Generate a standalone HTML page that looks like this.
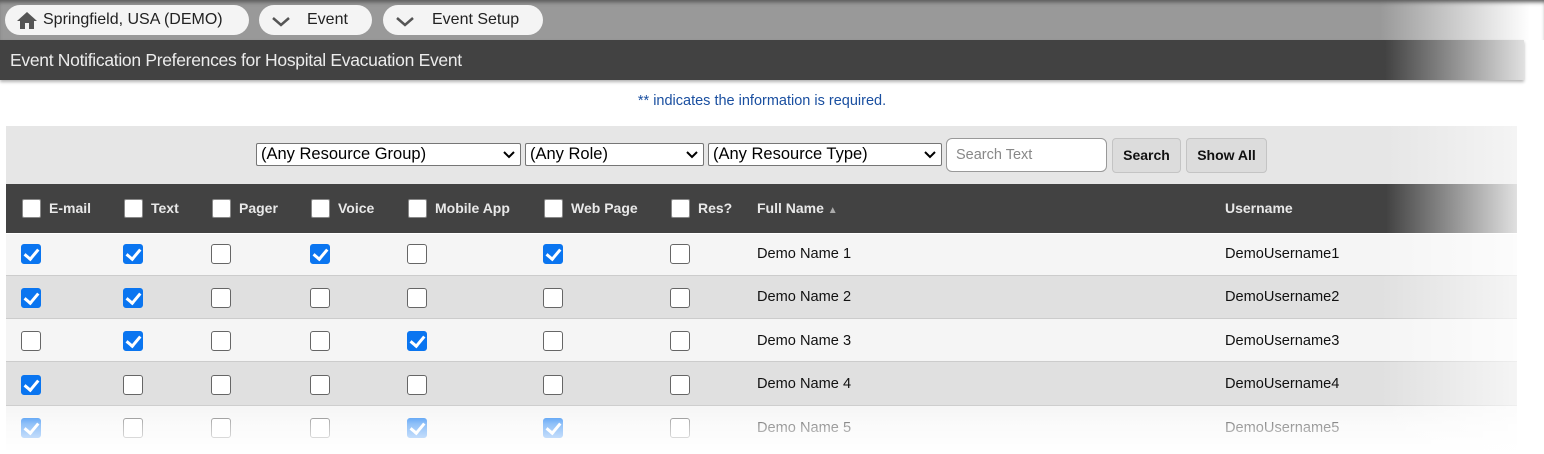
<!DOCTYPE html>
<html><head><style>
*{box-sizing:border-box;margin:0;padding:0}
body{width:1544px;height:454px;overflow:hidden;background:#fff;font-family:"Liberation Sans",Arial,sans-serif;position:relative}
.a{position:absolute}
.pill{position:absolute;top:5px;height:30px;background:#f4f4f4;border-radius:15px;font-size:16px;color:#222;line-height:30px}
.sel{position:absolute;top:143px;height:23px;background:#fff;border:1px solid #767676;border-radius:2px;font-size:16.5px;line-height:21px;padding-left:4px;color:#000}
.sel svg{position:absolute;right:5px;top:7px}
.btn{position:absolute;top:138px;height:35px;background:#dcdcdc;border:1px solid #c4c4c4;border-radius:4px;font-size:14px;font-weight:bold;line-height:33px;text-align:center;color:#111}
.hd{position:absolute;top:184px;left:6px;width:1511px;height:49px;background:#424242}
.hcb{position:absolute;top:199px;width:19px;height:19px;background:#fff;border:1px solid #888;border-radius:2px}
.hl{position:absolute;top:200px;color:#e8e8e8;font-size:14px;font-weight:bold}
.row{position:absolute;left:6px;width:1511px;border-bottom:1px solid #ccc}
.cb{position:absolute;width:20px;height:20px;border:1.5px solid #666;border-radius:3px;background:#fff}
.cb.c{background:#0a75f0;border-color:#0a75f0}
.cb.c::after{content:"";position:absolute;left:5px;top:1px;width:6px;height:11px;border:solid #fff;border-width:0 3px 3px 0;transform:rotate(40deg)}
.t{position:absolute;font-size:14.6px;color:#111}
</style></head><body>
<div class="a" style="left:0;top:0;width:1544px;height:40px;background:linear-gradient(90deg,#999 0,#999 1380px,#fff 1530px);box-shadow:inset 0 4px 4px -2px #555"></div>
<div class="pill" style="left:5px;width:244px;padding-left:38px">Springfield, USA (DEMO)
<svg class="a" style="left:12px;top:7px" width="20" height="17" viewBox="0 0 20 17"><path d="M10 0 L20 9 H17 V17 H12 V11 H8 V17 H3 V9 H0 Z" fill="#555"/></svg></div>
<div class="pill" style="left:259px;width:113px;padding-left:48px">Event
<svg class="a" style="left:12px;top:11px" width="20" height="12"><path d="M2 2 L10 9 L18 2" stroke="#555" stroke-width="2.5" fill="none"/></svg></div>
<div class="pill" style="left:383px;width:160px;padding-left:49px">Event Setup
<svg class="a" style="left:12px;top:11px" width="20" height="12"><path d="M2 2 L10 9 L18 2" stroke="#555" stroke-width="2.5" fill="none"/></svg></div>
<div class="a" style="left:0;top:40px;width:1524px;height:40px;background:linear-gradient(90deg,#424242 0,#424242 1385px,#e0e0e0 1524px);box-shadow:0 2px 3px rgba(0,0,0,.3);color:#ececec;font-size:17.5px;line-height:40px;padding-left:10px;letter-spacing:-0.3px">Event Notification Preferences for Hospital Evacuation Event</div>
<div class="a" style="left:0;top:93px;width:1524px;text-align:center;font-size:14.5px;color:#1a4fa0">** indicates the information is required.</div>
<div class="a" style="left:6px;top:126px;width:1511px;height:58px;background:linear-gradient(90deg,#e6e6e6 0,#e6e6e6 1380px,#f4f4f4 1511px)"></div>
<div class="sel" style="left:256px;width:265px">(Any Resource Group)<svg width="12" height="8"><path d="M1 1 L6 6 L11 1" stroke="#000" stroke-width="2" fill="none"/></svg></div>
<div class="sel" style="left:525px;width:179px">(Any Role)<svg width="12" height="8"><path d="M1 1 L6 6 L11 1" stroke="#000" stroke-width="2" fill="none"/></svg></div>
<div class="sel" style="left:708px;width:234px">(Any Resource Type)<svg width="12" height="8"><path d="M1 1 L6 6 L11 1" stroke="#000" stroke-width="2" fill="none"/></svg></div>
<div class="a" style="left:946px;top:138px;width:161px;height:34px;background:#fff;border:1px solid #999;border-radius:6px;font-size:14.5px;color:#888;line-height:32px;padding-left:9px">Search Text</div>
<div class="btn" style="left:1112px;width:69px">Search</div>
<div class="btn" style="left:1186px;width:81px">Show All</div>
<div class="hd" style="background:linear-gradient(90deg,#424242 0,#424242 1380px,#e0e0e0 1511px)"></div>
<div class="hcb" style="left:22px"></div><div class="hl" style="left:49px">E-mail</div>
<div class="hcb" style="left:124px"></div><div class="hl" style="left:151px">Text</div>
<div class="hcb" style="left:212px"></div><div class="hl" style="left:239px">Pager</div>
<div class="hcb" style="left:311px"></div><div class="hl" style="left:338px">Voice</div>
<div class="hcb" style="left:408px"></div><div class="hl" style="left:435px">Mobile App</div>
<div class="hcb" style="left:544px"></div><div class="hl" style="left:571px">Web Page</div>
<div class="hcb" style="left:671px"></div><div class="hl" style="left:698px">Res?</div>
<div class="hl" style="left:757px">Full Name <span style="font-size:10px;color:#aaa">▲</span></div>
<div class="hl" style="left:1225px">Username</div>

<div class="row" style="top:234px;height:42px;background:#f5f5f5"></div>
<div class="row" style="top:276px;height:43px;background:#e0e0e0"></div>
<div class="row" style="top:319px;height:43px;background:#f5f5f5"></div>
<div class="row" style="top:362px;height:44px;background:#e0e0e0"></div>
<div class="row" style="top:406px;height:44px;background:#f5f5f5;border:0"></div>

<div class="cb c" style="left:21px;top:244px"></div><div class="cb c" style="left:123px;top:244px"></div><div class="cb" style="left:211px;top:244px"></div><div class="cb c" style="left:310px;top:244px"></div><div class="cb" style="left:407px;top:244px"></div><div class="cb c" style="left:543px;top:244px"></div><div class="cb" style="left:670px;top:244px"></div>
<div class="t" style="left:757px;top:246px">Demo Name 1</div><div class="t" style="left:1225px;top:246px">DemoUsername1</div>

<div class="cb c" style="left:21px;top:288px"></div><div class="cb c" style="left:123px;top:288px"></div><div class="cb" style="left:211px;top:288px"></div><div class="cb" style="left:310px;top:288px"></div><div class="cb" style="left:407px;top:288px"></div><div class="cb" style="left:543px;top:288px"></div><div class="cb" style="left:670px;top:288px"></div>
<div class="t" style="left:757px;top:289px">Demo Name 2</div><div class="t" style="left:1225px;top:289px">DemoUsername2</div>

<div class="cb" style="left:21px;top:331px"></div><div class="cb c" style="left:123px;top:331px"></div><div class="cb" style="left:211px;top:331px"></div><div class="cb" style="left:310px;top:331px"></div><div class="cb c" style="left:407px;top:331px"></div><div class="cb" style="left:543px;top:331px"></div><div class="cb" style="left:670px;top:331px"></div>
<div class="t" style="left:757px;top:333px">Demo Name 3</div><div class="t" style="left:1225px;top:333px">DemoUsername3</div>

<div class="cb c" style="left:21px;top:375px"></div><div class="cb" style="left:123px;top:375px"></div><div class="cb" style="left:211px;top:375px"></div><div class="cb" style="left:310px;top:375px"></div><div class="cb" style="left:407px;top:375px"></div><div class="cb" style="left:543px;top:375px"></div><div class="cb" style="left:670px;top:375px"></div>
<div class="t" style="left:757px;top:376px">Demo Name 4</div><div class="t" style="left:1225px;top:376px">DemoUsername4</div>

<div class="cb c" style="left:21px;top:418px"></div><div class="cb" style="left:123px;top:418px"></div><div class="cb" style="left:211px;top:418px"></div><div class="cb" style="left:310px;top:418px"></div><div class="cb c" style="left:407px;top:418px"></div><div class="cb c" style="left:543px;top:418px"></div><div class="cb" style="left:670px;top:418px"></div>
<div class="t" style="left:757px;top:420px">Demo Name 5</div><div class="t" style="left:1225px;top:420px">DemoUsername5</div>

<div class="a" style="left:0;top:404px;width:1544px;height:50px;background:linear-gradient(180deg,rgba(255,255,255,0) 0,rgba(255,255,255,.55) 40%,#fff 100%)"></div>
<div class="a" style="left:1380px;top:234px;width:164px;height:220px;background:linear-gradient(90deg,rgba(255,255,255,0),rgba(255,255,255,.8))"></div>
</body></html>
